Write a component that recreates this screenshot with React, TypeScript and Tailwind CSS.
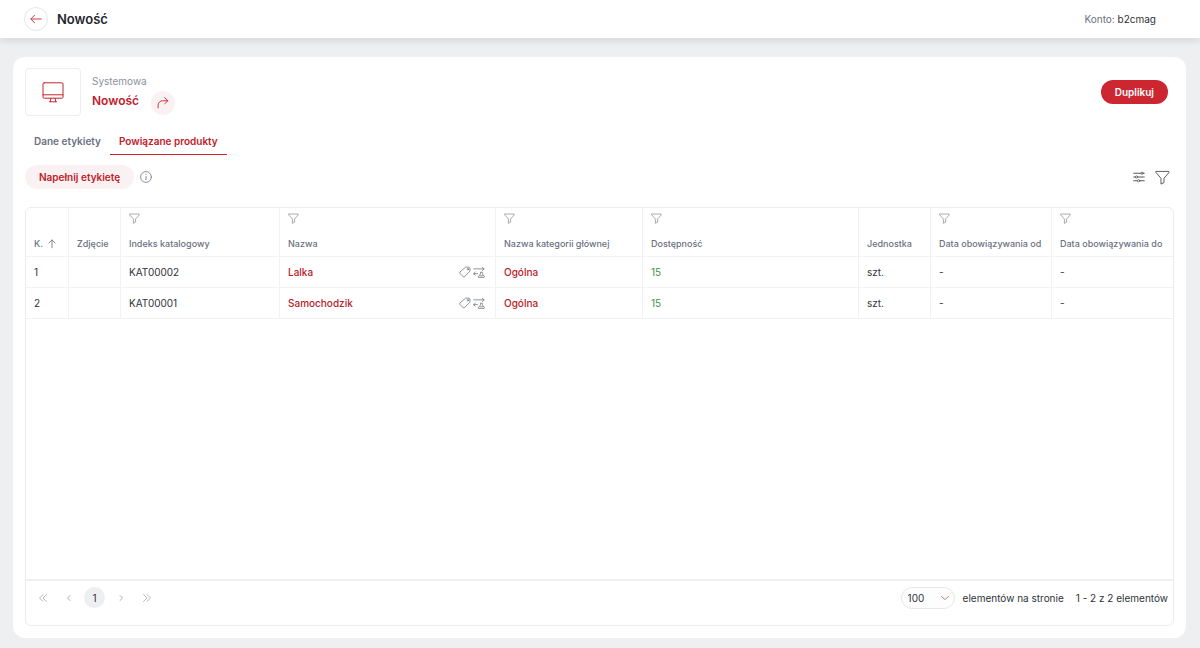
import type { ReactNode } from "react";
import clsx from "clsx";

interface Product {
  id: number;
  index: string;
  name: string;
  category: string;
  stock: number;
  unit: string;
  from: string;
  to: string;
}

const products: Product[] = [
  { id: 1, index: "KAT00002", name: "Lalka", category: "Ogólna", stock: 15, unit: "szt.", from: "-", to: "-" },
  { id: 2, index: "KAT00001", name: "Samochodzik", category: "Ogólna", stock: 15, unit: "szt.", from: "-", to: "-" },
];

interface Column {
  label: string;
  width?: string;
  filter?: boolean;
  sorted?: boolean;
}

// columns without a width share the remaining space
const columns: Column[] = [
  { label: "K.", width: "w-[43px]", sorted: true },
  { label: "Zdjęcie", width: "w-[52px]" },
  { label: "Indeks katalogowy", width: "w-[159px]", filter: true },
  { label: "Nazwa", filter: true },
  { label: "Nazwa kategorii głównej", width: "w-[147px]", filter: true },
  { label: "Dostępność", filter: true },
  { label: "Jednostka", width: "w-[72px]" },
  { label: "Data obowiązywania od", width: "w-[121px]", filter: true },
  { label: "Data obowiązywania do", width: "w-[121px]", filter: true },
];

interface IconProps {
  className?: string;
  viewBox?: string;
  children: ReactNode;
}

function Icon({ className, viewBox = "0 0 16 16", children }: IconProps) {
  return (
    <svg
      className={clsx("shrink-0", className)}
      viewBox={viewBox}
      fill="none"
      stroke="currentColor"
      strokeLinecap="round"
      strokeLinejoin="round"
      aria-hidden="true"
    >
      {children}
    </svg>
  );
}

function FunnelIcon({ className }: { className?: string }) {
  return (
    <Icon className={className}>
      <path d="M1.2 1.5h13.6v1.3L9.6 8.8v4.6L6.4 15V8.8L1.2 2.8z" />
    </Icon>
  );
}

function TagIcon() {
  return (
    <Icon className="size-3 text-[#6b7078]">
      <path d="M9.4 1.5h4.2l1 1v4.3l-7.4 7.7-1.2.2-5-5.1.1-1z" />
      <circle cx="11.8" cy="4.3" r="1" />
    </Icon>
  );
}

function ReplaceIcon() {
  return (
    <Icon className="size-3 text-[#6b7078]">
      <path d="M1 3.8h13.6M12.4 1.6l2.4 2.2-2.4 2.2M6 10.2H1M3 8.2l-2.2 2L3 12.2" />
      <path d="M7.6 15.2h7.2l.4-1.2-2.8-3.6V8.2H10v2.2L7.2 14zM9.4 13H13" />
    </Icon>
  );
}

function Cell({ children, className }: { children?: ReactNode; className?: string }) {
  return (
    <td className={clsx("h-[31px] border-r border-b border-[#f1f2f3] px-2 last:border-r-0", className)}>
      {children}
    </td>
  );
}

function ProductTable() {
  return (
    <table className="w-full table-fixed border-separate border-spacing-0 text-left">
      <colgroup>
        {columns.map((col) => (
          <col key={col.label} className={col.width} />
        ))}
      </colgroup>
      <thead>
        <tr>
          {columns.map((col) => (
            <th
              key={col.label}
              className="h-[49px] border-r border-b border-[#f1f2f3] px-2 align-bottom text-[9px] leading-3 font-medium whitespace-nowrap text-[#6b7080] last:border-r-0"
            >
              <div className="flex flex-col gap-3.5 pb-1.5">
                {col.filter && (
                  <button type="button" aria-label={`Filtruj: ${col.label}`} className="w-fit">
                    <FunnelIcon className="size-[11px] text-[#80868f]" />
                  </button>
                )}
                <span className="flex items-center gap-1">
                  {col.label}
                  {col.sorted && (
                    <Icon className="size-[10px]">
                      <path d="M8 14V1.5M3 6.5l5-5 5 5" strokeWidth="1.3" />
                    </Icon>
                  )}
                </span>
              </div>
            </th>
          ))}
        </tr>
      </thead>
      <tbody>
        {products.map((p) => (
          <tr key={p.id}>
            <Cell>{p.id}</Cell>
            <Cell />
            <Cell>{p.index}</Cell>
            <Cell>
              <div className="flex items-center justify-between pr-0.5">
                <a href="#" className="font-medium text-[#b8202a]">{p.name}</a>
                <span className="flex gap-0.5">
                  <button type="button" aria-label="Etykiety"><TagIcon /></button>
                  <button type="button" aria-label="Zamienniki"><ReplaceIcon /></button>
                </span>
              </div>
            </Cell>
            <Cell>
              <a href="#" className="font-medium text-[#b8202a]">{p.category}</a>
            </Cell>
            <Cell className="text-[#3f9142]">{p.stock}</Cell>
            <Cell>{p.unit}</Cell>
            <Cell>{p.from}</Cell>
            <Cell>{p.to}</Cell>
          </tr>
        ))}
      </tbody>
    </table>
  );
}

function PageButton({ label, children }: { label: string; children: ReactNode }) {
  return (
    <button type="button" aria-label={label} className="flex size-[21px] items-center justify-center text-[#8f939a]">
      <Icon className="size-2">{children}</Icon>
    </button>
  );
}

function Pager() {
  return (
    <footer className="flex h-[46px] items-start justify-between border-t-2 border-[#eeeff1] pt-1.5 pr-[5px] pl-1.5">
      <nav aria-label="Strony" className="flex items-center gap-[5px]">
        <PageButton label="Pierwsza strona">
          <path d="M8 1 1 8l7 7M15 1 8 8l7 7" strokeWidth="1.3" />
        </PageButton>
        <PageButton label="Poprzednia strona">
          <path d="m10 3-5 5 5 5" strokeWidth="1.5" />
        </PageButton>
        <button type="button" aria-current="page" className="size-[21px] rounded-full bg-[#edeff1]">
          1
        </button>
        <PageButton label="Następna strona">
          <path d="m6 3 5 5-5 5" strokeWidth="1.5" />
        </PageButton>
        <PageButton label="Ostatnia strona">
          <path d="m1 1 7 7-7 7M8 1l7 7-7 7" strokeWidth="1.3" />
        </PageButton>
      </nav>
      <div className="flex items-center">
        <div className="relative">
          <select
            id="page-size"
            defaultValue="100"
            className="h-[22px] w-[54px] appearance-none rounded-full border border-[#e6e8ea] bg-[#fdfdfd] pl-1.5"
          >
            <option>50</option>
            <option>100</option>
          </select>
          <Icon className="pointer-events-none absolute top-[7px] right-1.5 size-2 text-[#c47f79]">
            <path d="m1 5 7 6 7-6" strokeWidth="2" />
          </Icon>
        </div>
        <label htmlFor="page-size" className="ml-2">elementów na stronie</label>
        <span className="ml-3">1 - 2 z 2 elementów</span>
      </div>
    </footer>
  );
}

export default function App() {
  return (
    <div className="flex min-h-screen flex-col bg-[#edeff1] font-['Inter',sans-serif] text-[10px] leading-4 text-[#30323a]">
      <header className="flex h-[38px] items-center justify-between bg-white pr-11 pl-6 shadow-[0_2px_8px_rgba(0,0,0,0.12)]">
        <div className="flex items-center gap-[9px]">
          <button
            type="button"
            aria-label="Wstecz"
            className="flex size-6 items-center justify-center rounded-full border border-[#e4e6e8] text-[#c4262e]"
          >
            <Icon className="size-3">
              <path d="M15 8H1.5M6 3 1.2 8 6 13" strokeWidth="1.2" />
            </Icon>
          </button>
          <h1 className="text-[13px] font-semibold text-[#26272f]">Nowość</h1>
        </div>
        <div>
          <span className="text-[#6b7080]">Konto:</span> b2cmag
        </div>
      </header>

      <main className="flex flex-1 flex-col pt-[19px] pr-3.5 pb-2.5 pl-[13px]">
        <section className="flex flex-1 flex-col rounded-xl bg-white px-3 pt-[11px] pb-3">
          <div className="flex items-center justify-between pr-1.5">
            <div className="flex items-center gap-[11px]">
              <div className="flex h-12 w-14 items-center justify-center rounded border border-[#eceef0] text-[#c4262e]">
                <Icon className="h-[21px] w-[22px]" viewBox="0 0 22 21">
                  <rect x="1" y="0.8" width="20" height="15.4" rx="1.2" />
                  <path d="M1 12.8h20M9 16.2l-.8 3.4M13 16.2l.8 3.4M7.5 19.8h7" />
                </Icon>
              </div>
              <div className="pt-0.5">
                <p className="text-[#8b909b]">Systemowa</p>
                <div className="flex h-6 items-center gap-3">
                  <h2 className="text-xs font-semibold text-[#c1202a]">Nowość</h2>
                  <button
                    type="button"
                    aria-label="Przejdź"
                    className="mt-1 flex size-6 items-center justify-center rounded-full bg-[#faf1f2] text-[#c4262e]"
                  >
                    <Icon className="size-3">
                      <path d="M1.5 14.5V11a6 6 0 0 1 6-6h7M10.2 1l4.3 4-4.3 4" strokeWidth="1.2" />
                    </Icon>
                  </button>
                </div>
              </div>
            </div>
            <button type="button" className="h-6 rounded-full bg-[#cc2630] px-3.5 font-semibold text-white">
              Duplikuj
            </button>
          </div>

          <div role="tablist" className="mt-3 flex">
            <button
              type="button"
              role="tab"
              aria-selected="false"
              className="h-[27px] border-b border-transparent px-[9px] font-semibold text-[#6b7080]"
            >
              Dane etykiety
            </button>
            <button
              type="button"
              role="tab"
              aria-selected="true"
              className="h-[27px] border-b border-[#cc2630] px-[9px] font-semibold text-[#c1202a]"
            >
              Powiązane produkty
            </button>
          </div>

          <div className="mt-2.5 flex items-center justify-between pr-1">
            <div className="flex items-center gap-1.5">
              <button type="button" className="h-6 rounded-full bg-[#faf1f2] px-3.5 font-semibold text-[#c1202a]">
                Napełnij etykietę
              </button>
              <button type="button" aria-label="Informacja" className="text-[#80858d]">
                <Icon className="size-3">
                  <circle cx="8" cy="8" r="7.2" strokeWidth="1.2" />
                  <path d="M8 7.2v4.6M8 4.3v.4" strokeWidth="1.3" />
                </Icon>
              </button>
            </div>
            <div className="flex items-center gap-2.5 text-[#50545c]">
              <button type="button" aria-label="Ustawienia kolumn">
                <Icon className="size-3">
                  <path d="M1 3h9.5M13.5 3H15M1 8h2M6 8h9M1 13h5M9 13h6" strokeWidth="1.3" />
                  <circle cx="12" cy="3" r="1.5" />
                  <circle cx="4.5" cy="8" r="1.5" />
                  <circle cx="7.5" cy="13" r="1.5" />
                </Icon>
              </button>
              <button type="button" aria-label="Filtry">
                <FunnelIcon className="size-[15px]" />
              </button>
            </div>
          </div>

          <div className="mt-[18px] flex flex-1 flex-col overflow-hidden rounded-md border border-[#eaecee]">
            <div className="flex-1">
              <ProductTable />
            </div>
            <Pager />
          </div>
        </section>
      </main>
    </div>
  );
}
